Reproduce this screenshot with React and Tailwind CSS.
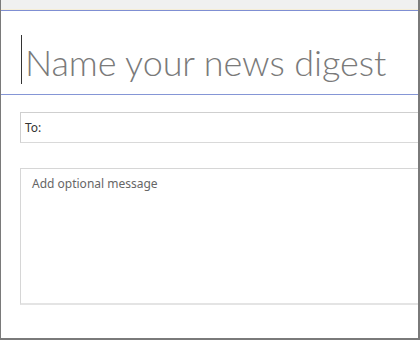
import React from 'react';

const App = () => {
  return (
    <div
      className="w-[420px] h-[340px] bg-white overflow-hidden border-l border-b-2 border-r-2 border-[#7a7a7a] flex flex-col"
      style={{ fontFamily: '"Noto Sans", "Liberation Sans", sans-serif' }}
    >
      {/* top strip */}
      <div className="h-[9px] shrink-0 bg-[#f0f0f0]" />
      <div className="h-px shrink-0 bg-[#f5edd6]" />
      <div className="h-px shrink-0 bg-[#7f8fd3]" />

      {/* digest title */}
      <div className="h-[83px] shrink-0 flex items-start pl-5 pt-[24px]">
        <div className="w-px h-[49px] bg-[#333] mr-[3px] shrink-0" />
        <span
          className="mt-[9px] text-[36px] font-light text-[#7a7a7a] leading-none whitespace-nowrap tracking-[-0.1px]"
          style={{ fontFamily: 'Lato, "Liberation Sans", sans-serif' }}
        >
          Name your news digest
        </span>
      </div>
      <div className="h-px shrink-0 bg-[#8596d6]" />

      {/* recipients */}
      <div className="mt-[17px] ml-[19px] h-[31px] shrink-0 border border-r-0 border-[#cfcfcf] border-b-[#d9d9d9] flex items-center pl-1">
        <span className="text-[12px] text-[#333]">To:</span>
      </div>

      {/* message */}
      <div className="mt-[25px] ml-[19px] h-[137px] shrink-0 border border-r-0 border-b-2 border-[#d6d6d6] border-b-[#e4e4e4] pl-[11px] pt-px">
        <span className="text-[12px] text-[#666]">Add optional message</span>
      </div>
    </div>
  );
};

export default App;
